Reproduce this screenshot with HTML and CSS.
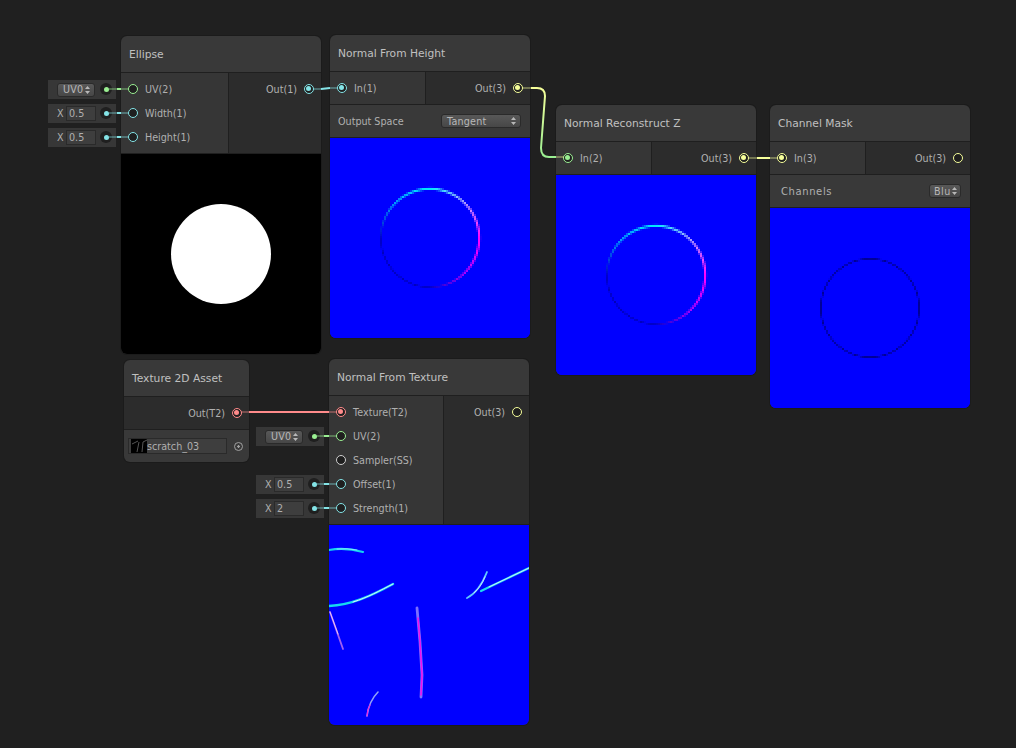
FILE: index.html
```html
<!DOCTYPE html>
<html lang="en">
<head>
  <meta charset="UTF-8">
  <title>Shader Graph</title>
  <link rel="stylesheet" href="styles.css">
</head>
<body>
  <div class="graph">

    <!-- Ellipse -->
    <div class="node node-ellipse">
      <div class="title">Ellipse</div>
      <div class="ports">
        <div class="col-in col-wide">
          <div class="row">
            <div class="inline"><span class="btn btn-uv">UV0<svg class="updown" viewBox="0 0 5 8"><path d="M2.5 0L5 3H0zM2.5 8L0 5h5z"/></svg></span><span class="dot dot-green"></span></div>
            <span class="port green"></span><span>UV(2)</span>
          </div>
          <div class="row">
            <div class="inline"><span class="x">X</span><span class="num">0.5</span><span class="dot dot-cyan"></span></div>
            <span class="port cyan"></span><span>Width(1)</span>
          </div>
          <div class="row">
            <div class="inline"><span class="x">X</span><span class="num">0.5</span><span class="dot dot-cyan"></span></div>
            <span class="port cyan"></span><span>Height(1)</span>
          </div>
        </div>
        <div class="col-out">
          <div class="row row-out"><span>Out(1)</span><span class="port cyan on"></span></div>
        </div>
      </div>
      <div class="preview preview-black"><div class="disc"></div></div>
    </div>

    <!-- Normal From Height -->
    <div class="node node-height">
      <div class="title">Normal From Height</div>
      <div class="ports">
        <div class="col-in">
          <div class="row"><span class="port cyan on"></span><span>In(1)</span></div>
        </div>
        <div class="col-out">
          <div class="row row-out"><span>Out(3)</span><span class="port yellow on"></span></div>
        </div>
      </div>
      <div class="option">
        <span>Output Space</span>
        <span class="btn btn-wide">Tangent<svg class="updown" viewBox="0 0 5 8"><path d="M2.5 0L5 3H0zM2.5 8L0 5h5z"/></svg></span>
      </div>
      <div class="preview"><canvas width="100" height="100" data-ring="normal"></canvas></div>
    </div>

    <!-- Normal Reconstruct Z -->
    <div class="node node-recon">
      <div class="title">Normal Reconstruct Z</div>
      <div class="ports">
        <div class="col-in">
          <div class="row"><span class="port green on"></span><span>In(2)</span></div>
        </div>
        <div class="col-out">
          <div class="row row-out"><span>Out(3)</span><span class="port yellow on"></span></div>
        </div>
      </div>
      <div class="preview"><canvas width="100" height="100" data-ring="normal"></canvas></div>
    </div>

    <!-- Channel Mask -->
    <div class="node node-mask">
      <div class="title">Channel Mask</div>
      <div class="ports">
        <div class="col-in">
          <div class="row"><span class="port yellow on"></span><span>In(3)</span></div>
        </div>
        <div class="col-out">
          <div class="row row-out"><span>Out(3)</span><span class="port yellow"></span></div>
        </div>
      </div>
      <div class="option option-spaced">
        <span>Channels</span>
        <span class="btn btn-small">Blu<svg class="updown" viewBox="0 0 5 8"><path d="M2.5 0L5 3H0zM2.5 8L0 5h5z"/></svg></span>
      </div>
      <div class="preview"><canvas width="100" height="100" data-ring="mask"></canvas></div>
    </div>

    <!-- Texture 2D Asset -->
    <div class="node node-asset">
      <div class="title">Texture 2D Asset</div>
      <div class="ports">
        <div class="col-out">
          <div class="row row-out"><span>Out(T2)</span><span class="port red on"></span></div>
        </div>
      </div>
      <div class="asset-row">
        <div class="asset-field">
          <svg class="thumb" viewBox="0 0 16 14"><rect width="16" height="14"/><path d="M1 5L7 2M6 13L8 3M11 13L12 3L16 1" stroke="#555" fill="none"/></svg>
          <span>scratch_03</span>
        </div>
        <span class="picker"></span>
      </div>
    </div>

    <!-- Normal From Texture -->
    <div class="node node-texture">
      <div class="title">Normal From Texture</div>
      <div class="ports">
        <div class="col-in col-widest">
          <div class="row"><span class="port red on"></span><span>Texture(T2)</span></div>
          <div class="row">
            <div class="inline"><span class="btn btn-uv">UV0<svg class="updown" viewBox="0 0 5 8"><path d="M2.5 0L5 3H0zM2.5 8L0 5h5z"/></svg></span><span class="dot dot-green"></span></div>
            <span class="port green"></span><span>UV(2)</span>
          </div>
          <div class="row"><span class="port white"></span><span>Sampler(SS)</span></div>
          <div class="row">
            <div class="inline"><span class="x">X</span><span class="num">0.5</span><span class="dot dot-cyan"></span></div>
            <span class="port cyan"></span><span>Offset(1)</span>
          </div>
          <div class="row">
            <div class="inline"><span class="x">X</span><span class="num">2</span><span class="dot dot-cyan"></span></div>
            <span class="port cyan"></span><span>Strength(1)</span>
          </div>
        </div>
        <div class="col-out">
          <div class="row row-out"><span>Out(3)</span><span class="port yellow"></span></div>
        </div>
      </div>
      <div class="preview">
        <svg class="scratches" viewBox="0 0 200 200">
          <defs>
            <filter id="soft" x="-10%" y="-10%" width="120%" height="120%"><feGaussianBlur stdDeviation="0.3"/></filter>
          </defs>
          <g fill="none" stroke-linecap="round" stroke-linejoin="round" filter="url(#soft)">
            <path d="M0 25Q16 22 34 27" stroke="#14d4f0" stroke-width="2.2"/>
            <path d="M8 24Q18 23 28 25" stroke="#a0f0ff" stroke-width="0.8"/>
            <path d="M0 81C22 80 42 71 64 59" stroke="#14d8f0" stroke-width="2.4"/>
            <path d="M24 77C40 72 50 66 64 59" stroke="#e0ecff" stroke-width="1"/>
            <path d="M1 87L14 124" stroke="#a060f0" stroke-width="1.8"/>
            <path d="M1 87L9 109" stroke="#f0d0f8" stroke-width="0.9"/>
            <path d="M88 83L91 117L93 150L92 172" stroke="#7c70ff" stroke-width="2.8"/>
            <path d="M89 93L91 117L93 150L92 170" stroke="#f010f0" stroke-width="1.6"/>
            <path d="M49 167Q40 176 38 191" stroke="#90a0f8" stroke-width="1.6"/>
            <path d="M41 180Q38 185 38 191" stroke="#f020e0" stroke-width="1.2"/>
            <path d="M138 73Q150 67 158 47" stroke="#60c8ff" stroke-width="1.8"/>
            <path d="M145 68Q152 62 156 52" stroke="#d8e4ff" stroke-width="0.8"/>
            <path d="M152 66L200 43" stroke="#20d8f0" stroke-width="2.2"/>
            <path d="M160 62L200 43" stroke="#e0ecff" stroke-width="0.9"/>
          </g>
        </svg>
      </div>
    </div>

    <!-- Wires -->
    <svg class="wires" viewBox="0 0 1016 748">
      <g fill="none" stroke-width="2">
        <g opacity="0.35">
          <path d="M109 89H129" stroke="#9aef92"/>
          <path d="M109 113H129M109 137H129M313 89H321M330 88H338" stroke="#84e4e7"/>
          <path d="M522 88H532M556 157H564M748 158H757M770 158H778" stroke="#f6ff9a"/>
          <path d="M241 412H249M329 412H337" stroke="#ff8b8b"/>
          <path d="M317 436H337" stroke="#9aef92"/>
          <path d="M317 484H337M317 508H337" stroke="#84e4e7"/>
        </g>
        <path d="M117 89H121M324 436H329" stroke="#9aef92"/>
        <path d="M117 113H121M117 137H121M321 89L330 88M324 484H329M324 508H329" stroke="#84e4e7"/>
        <path d="M531 88H537Q545 88 545 96L541 148Q541 157 549 157H556" stroke="url(#wire-yg)"/>
        <path d="M757 158H770" stroke="#f6ff9a"/>
        <path d="M249 412H329" stroke="#ff8b8b"/>
      </g>
      <defs>
        <linearGradient id="wire-yg" gradientUnits="userSpaceOnUse" x1="0" y1="88" x2="0" y2="157">
          <stop offset="0" stop-color="#f6ff9a"/>
          <stop offset="1" stop-color="#9aef92"/>
        </linearGradient>
      </defs>
    </svg>
  </div>

  <script>
    // Ring preview, drawn at 100x100 and scaled up so it stays blocky
    function ringColor(kind, nx, ny) {
      if (kind === 'mask') return [0, 0, 150];
      const r = Math.max(nx, 0);
      const g = Math.max(ny, 0) * 0.9;
      const b = nx + ny < 0 ? 1 + 0.2 * (nx + ny) : 1;
      return [r * 255, g * 255, b * 255];
    }

    function ringWidth(kind, nx, ny) {
      if (kind === 'mask') return 0.5;
      return 0.5 + 0.35 * Math.max(Math.max(nx, ny), 0);
    }

    document.querySelectorAll('canvas[data-ring]').forEach(canvas => {
      const ctx = canvas.getContext('2d');
      const kind = canvas.dataset.ring;
      ctx.fillStyle = '#0000ff';
      ctx.fillRect(0, 0, 100, 100);
      for (let y = 0; y < 100; y++) {
        for (let x = 0; x < 100; x++) {
          const dx = x + 0.5 - 50;
          const dy = 50 - (y + 0.5);
          const d = Math.sqrt(dx * dx + dy * dy);
          const width = ringWidth(kind, dx / d, dy / d);
          const alpha = 1.15 - Math.abs(d - 24.6) / width;
          if (alpha <= 0) continue;
          const [r, g, b] = ringColor(kind, dx / d, dy / d);
          ctx.fillStyle = `rgba(${r | 0},${g | 0},${b | 0},${Math.min(alpha, 1)})`;
          ctx.fillRect(x, y, 1, 1);
        }
      }
    });
  </script>
</body>
</html>
```

FILE: styles.css
```css
body {
  margin: 0;
  background: #202020;
  font-family: "DejaVu Sans", sans-serif;
  font-size: 9.6px;
  color: #b0b0b0;
  overflow: hidden;
}
.graph {
  position: relative;
  width: 1016px;
  height: 748px;
}
.wires {
  position: absolute;
  left: 0;
  top: 0;
  width: 1016px;
  height: 748px;
  pointer-events: none;
}

/* nodes sit on a free canvas */
.node {
  position: absolute;
  width: 200px;
  background: #393939;
  border-radius: 6px;
  box-shadow: 0 0 0 1px #1b1b1b;
}
.node-ellipse { left: 121px; top: 36px; }
.node-height { left: 330px; top: 35px; }
.node-recon { left: 556px; top: 105px; }
.node-mask { left: 770px; top: 105px; }
.node-asset { left: 124px; top: 360px; width: 125px; }
.node-texture { left: 329px; top: 359px; }

.title {
  height: 37px;
  line-height: 37px;
  padding-left: 8px;
  font-size: 10.7px;
  color: #c0c0c0;
  border-bottom: 1px solid #1f1f1f;
  box-sizing: border-box;
}
.ports {
  display: flex;
  border-bottom: 1px solid #1f1f1f;
  background: #2c2c2c;
}
.col-in {
  width: 96px;
  box-sizing: border-box;
  padding: 4px 0;
  background: #363636;
  border-right: 1px solid #1f1f1f;
}
.col-wide { width: 108px; }
.col-widest { width: 115px; }
.col-out {
  flex: 1;
  padding: 4px 0;
}
.row {
  position: relative;
  display: flex;
  align-items: center;
  gap: 7px;
  height: 24px;
  padding-left: 7px;
}
.row-out {
  justify-content: flex-end;
  padding-left: 0;
  padding-right: 7px;
}

/* ports */
.port {
  position: relative;
  width: 10px;
  height: 10px;
  box-sizing: border-box;
  border: 1.5px solid #ccc;
  border-radius: 50%;
  background: #1f1f1f;
  flex: none;
}
.port.on::after {
  content: "";
  position: absolute;
  left: 1px;
  top: 1px;
  width: 5px;
  height: 5px;
  border-radius: 50%;
  background: inherit;
}
.cyan { border-color: #84e4e7; }
.green { border-color: #9aef92; }
.yellow { border-color: #f6ff9a; }
.red { border-color: #ff8b8b; }
.white { border-color: #d0d0d0; }
.port.cyan.on::after { background: #84e4e7; }
.port.green.on::after { background: #9aef92; }
.port.yellow.on::after { background: #f6ff9a; }
.port.red.on::after { background: #ff8b8b; }

/* inline controls left of a port */
.inline {
  position: absolute;
  right: 100%;
  top: 3px;
  margin-right: 5px;
  width: 68px;
  height: 19px;
  background: #373737;
  display: flex;
  align-items: center;
  box-sizing: border-box;
  padding-left: 9px;
}
.x {
  width: 9px;
  flex: none;
}
.num {
  width: 30px;
  height: 15px;
  line-height: 14px;
  box-sizing: border-box;
  padding-left: 2px;
  background: #3e3e3e;
  border: 1px solid #2a2a2a;
  flex: none;
}
.dot {
  position: absolute;
  right: 4px;
  top: 3px;
  width: 12px;
  height: 12px;
  border-radius: 50%;
  background: #1f1f1f;
}
.dot::after {
  content: "";
  position: absolute;
  left: 3.5px;
  top: 3.5px;
  width: 5px;
  height: 5px;
  border-radius: 50%;
}
.dot-cyan::after { background: #84e4e7; }
.dot-green::after { background: #9aef92; }

/* buttons */
.btn {
  display: flex;
  align-items: center;
  justify-content: space-between;
  box-sizing: border-box;
  height: 14px;
  padding: 0 4px 0 5px;
  background: linear-gradient(#585858, #474747);
  border: 1px solid #2a2a2a;
  border-radius: 3px;
  color: #b8b8b8;
}
.btn-uv { width: 38px; letter-spacing: 0.2px; }
.btn-wide { width: 80px; padding-left: 5px; letter-spacing: 0.2px; }
.btn-small { width: 32px; padding: 0 3px 0 4px; letter-spacing: 0.5px; }
.updown {
  width: 5px;
  height: 8px;
  fill: #b8b8b8;
  flex: none;
}

/* control rows */
.option {
  display: flex;
  align-items: center;
  justify-content: space-between;
  height: 32px;
  padding: 0 9px 0 8px;
  border-bottom: 1px solid #1f1f1f;
}
.option-spaced {
  padding-left: 11px;
}
.option-spaced > span:first-child {
  font-size: 10px;
  letter-spacing: 0.6px;
}
.asset-row {
  display: flex;
  align-items: center;
  height: 32px;
  padding-left: 4px;
}
.asset-field {
  display: flex;
  align-items: center;
  width: 99px;
  height: 16px;
  box-sizing: border-box;
  padding-left: 2px;
  background: #3e3e3e;
  border: 1px solid #2a2a2a;
}
.thumb {
  width: 16px;
  height: 14px;
  flex: none;
}
.picker {
  width: 7px;
  height: 7px;
  margin-left: 7px;
  border: 1px solid #a0a0a0;
  border-radius: 50%;
  background: radial-gradient(circle, #a0a0a0 1px, transparent 1.5px);
}

/* previews */
.preview {
  width: 200px;
  height: 200px;
  background: #0000ff;
  border-radius: 0 0 6px 6px;
  overflow: hidden;
}
.preview canvas {
  display: block;
  width: 200px;
  height: 200px;
  image-rendering: pixelated;
}
.preview-black {
  background: #000;
  display: flex;
  align-items: center;
  justify-content: center;
}
.disc {
  width: 100px;
  height: 100px;
  border-radius: 50%;
  background: #fff;
}
.scratches {
  display: block;
  width: 200px;
  height: 200px;
}
```
